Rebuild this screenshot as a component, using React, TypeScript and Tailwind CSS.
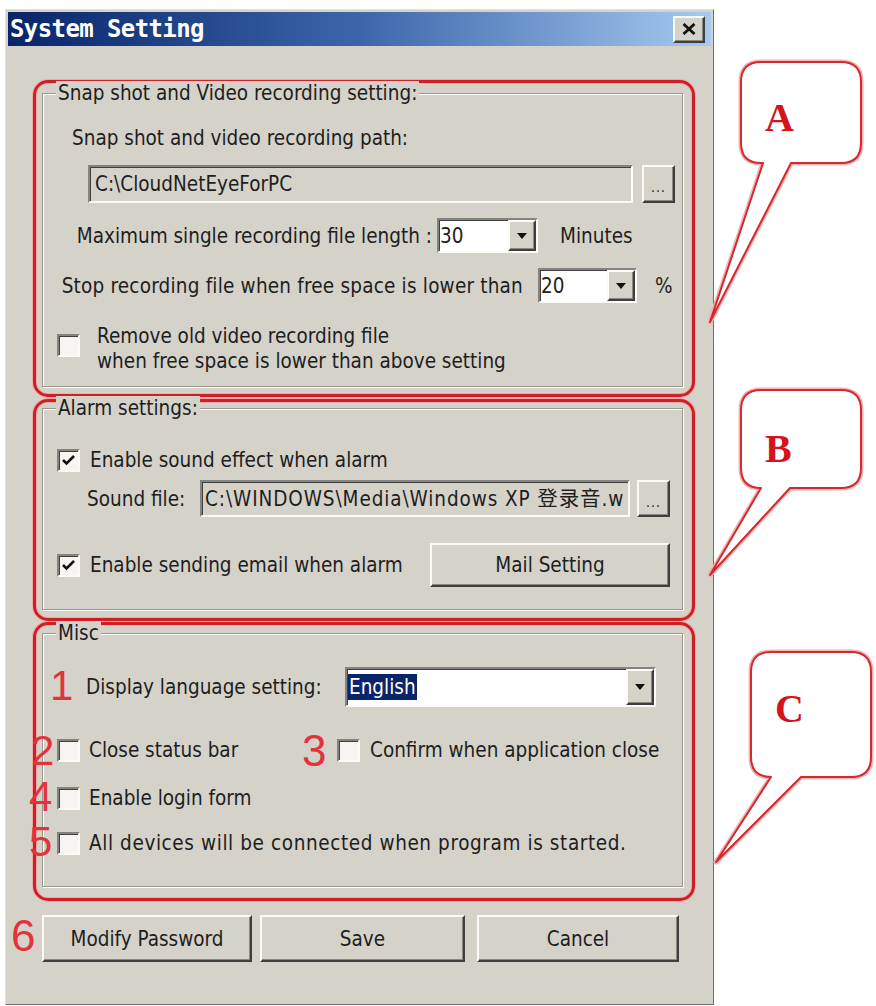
import React from "react";

function Raised({ className = "", children }: { className?: string; children?: React.ReactNode }) {
  return (
    <div
      className={`flex items-center justify-center bg-[#d5d2ca] border-2 border-t-[#fbfaf7] border-l-[#fbfaf7] border-r-[#3e3e3e] border-b-[#3e3e3e] shadow-[inset_-1px_-1px_0_#8a8883] ${className}`}
    >
      {children}
    </div>
  );
}

function Sunken({ className = "", children }: { className?: string; children?: React.ReactNode }) {
  return (
    <div
      className={`border-2 border-t-[#858380] border-l-[#858380] border-r-[#fbfaf7] border-b-[#fbfaf7] shadow-[inset_1px_1px_0_#404040] ${className}`}
    >
      {children}
    </div>
  );
}

function Check({ checked = false }: { checked?: boolean }) {
  return (
    <Sunken className="w-[23px] h-[23px] shrink-0 bg-[#f6f5f1] flex items-center justify-center">
      {checked && (
        <svg width="15" height="13" viewBox="0 0 15 13">
          <path d="M2 6 L5.5 9.5 L13 2" fill="none" stroke="#111" strokeWidth="2.6" />
        </svg>
      )}
    </Sunken>
  );
}

function Arrow() {
  return (
    <Raised className="w-[28px] h-full shrink-0">
      <svg width="10" height="6" viewBox="0 0 10 6">
        <path d="M0 0 H10 L5 6 Z" fill="#111" />
      </svg>
    </Raised>
  );
}

function Combo({ className = "", value }: { className?: string; value: string }) {
  return (
    <Sunken className={`flex bg-white ${className}`}>
      <div className="flex-1 flex items-center pl-[1px] overflow-hidden">{value}</div>
      <Arrow />
    </Sunken>
  );
}

function Frame({ legend, className = "", children }: { legend: string; className?: string; children?: React.ReactNode }) {
  return (
    <div
      className={`relative border border-[#9b9891] shadow-[inset_1px_1px_0_#ffffff,1px_1px_0_#ffffff] ${className}`}
    >
      <div className="absolute left-[13px] top-[-13px] bg-[#d5d2ca] px-[2px] leading-[24px] whitespace-nowrap">
        {legend}
      </div>
      {children}
    </div>
  );
}

function Num({ n, className = "" }: { n: string; className?: string }) {
  return (
    <span
      className={`absolute font-['Liberation_Sans',sans-serif] text-[42px] leading-none text-[#e2333a] ${className}`}
    >
      {n}
    </span>
  );
}

function RedBox({ className = "", children }: { className?: string; children?: React.ReactNode }) {
  return (
    <div
      className={`w-[662px] rounded-[15px] border-[3px] border-[#cf1f26] shadow-[0_0_0_1px_#f2abab,inset_0_0_0_1px_#f2abab] pl-[6px] ${className}`}
    >
      {children}
    </div>
  );
}

function calloutPath(x0: number, y0: number, x1: number, y1: number, t1: number, t2: number, px: number, py: number) {
  const r = 20;
  return `M ${x0 + r} ${y0} H ${x1 - r} Q ${x1} ${y0} ${x1} ${y0 + r} V ${y1 - r} Q ${x1} ${y1} ${x1 - r} ${y1} H ${t2} L ${px} ${py} L ${t1} ${y1} H ${x0 + r} Q ${x0} ${y1} ${x0} ${y1 - r} V ${y0 + r} Q ${x0} ${y0} ${x0 + r} ${y0} Z`;
}

function Callouts() {
  const items = [
    { d: calloutPath(741, 62, 861, 163, 763, 791, 710, 322), t: "A", x: 765, y: 131 },
    { d: calloutPath(741, 390, 861, 488, 761, 790, 710, 575), t: "B", x: 765, y: 462 },
    { d: calloutPath(751, 652, 871, 777, 771, 801, 716, 862), t: "C", x: 775, y: 722 },
  ];
  return (
    <svg className="absolute left-0 top-0 pointer-events-none" width="876" height="1006" viewBox="0 0 876 1006">
      {items.map((it) => (
        <g key={it.t}>
          <path d={it.d} fill="#ffffff" stroke="#f2b3b3" strokeWidth="5" strokeLinejoin="round" />
          <path d={it.d} fill="#ffffff" stroke="#d42a2f" strokeWidth="2" strokeLinejoin="round" />
          <text
            x={it.x}
            y={it.y}
            fontFamily="'Liberation Serif', serif"
            fontWeight="bold"
            fontSize="40"
            fill="#d4141c"
          >
            {it.t}
          </text>
        </g>
      ))}
    </svg>
  );
}

export default function App() {
  return (
    <div className="relative w-[876px] h-[1006px] bg-white overflow-hidden pt-[9px] pl-[5px] font-['DejaVu_Sans_Condensed','DejaVu_Sans','Noto_Sans_CJK_SC',sans-serif] text-[20.5px] leading-[24px] text-[#1e1e1e]">
      <div className="w-[709px] h-[996px] border border-t-[#e4e1da] border-l-[#e4e1da] border-r-[#6d6d6d] border-b-[#6d6d6d] bg-[#d5d2ca] p-[2px] flex flex-col">
        {/* Title bar */}
        <div className="h-[34px] shrink-0 bg-linear-to-r from-[#0a246a] via-[#3d66aa] to-[#a6caf0] flex items-center justify-between pl-[2px] pr-[6px]">
          <span className="font-['DejaVu_Sans_Mono',monospace] font-bold text-[24px] text-white leading-none tracking-[-0.6px]">
            System Setting
          </span>
          <Raised className="w-[32px] h-[27px]">
            <svg width="14" height="12" viewBox="0 0 14 12">
              <path d="M1.5 1 L12.5 11 M12.5 1 L1.5 11" stroke="#111" strokeWidth="2.8" />
            </svg>
          </Raised>
        </div>

        {/* Body */}
        <div className="flex-1 flex flex-col pl-[25px] pt-[34px]">
          {/* A */}
          <RedBox className="h-[317px] pt-[10px]">
            <Frame legend="Snap shot and Video recording setting:" className="w-[641px] h-[294px]">
              <div className="flex flex-col pt-[32px]">
                <div className="pl-[29px] h-[24px]">Snap shot and video recording path:</div>
                <div className="flex items-center mt-[15px] pl-[45px] h-[38px]">
                  <Sunken className="w-[545px] h-[38px] flex items-center pl-[5px]">C:\CloudNetEyeForPC</Sunken>
                  <Raised className="w-[33px] h-[38px] ml-[9px]">
                    <span className="text-[14px] leading-none tracking-[1px] mt-[6px]">...</span>
                  </Raised>
                </div>
                <div className="flex items-center mt-[15px] h-[35px]">
                  <div className="w-[394px] text-right pr-[5px] whitespace-nowrap">Maximum single recording file length :</div>
                  <Combo className="w-[101px] h-[35px]" value="30" />
                  <span className="ml-[22px]">Minutes</span>
                </div>
                <div className="flex items-center mt-[15px] h-[35px]">
                  <div className="w-[495px] text-right pr-[15px] whitespace-nowrap tracking-[0.2px]">Stop recording file when free space is lower than</div>
                  <Combo className="w-[99px] h-[35px]" value="20" />
                  <span className="ml-[18px]">%</span>
                </div>
                <div className="flex items-start mt-[21px] pl-[14px]">
                  <div className="mt-[10px]">
                    <Check />
                  </div>
                  <div className="ml-[17px] leading-[25px]">
                    Remove old video recording file
                    <br />
                    when free space is lower than above setting
                  </div>
                </div>
              </div>
            </Frame>
          </RedBox>

          {/* B */}
          <RedBox className="h-[222px] pt-[6px] mt-[2px]">
            <Frame legend="Alarm settings:" className="w-[641px] h-[202px]">
              <div className="flex flex-col pt-[39px]">
                <div className="flex items-center pl-[14px] h-[24px]">
                  <Check checked />
                  <span className="ml-[10px]">Enable sound effect when alarm</span>
                </div>
                <div className="flex items-center mt-[8px] pl-[44px] h-[37px]">
                  <span className="w-[113px] shrink-0">Sound file:</span>
                  <Sunken className="w-[430px] h-[37px] flex items-center pl-[3px] whitespace-nowrap tracking-[0.9px]">
                    C:\WINDOWS\Media\Windows XP 登录音.w
                  </Sunken>
                  <Raised className="w-[33px] h-[37px] ml-[7px]">
                    <span className="text-[14px] leading-none tracking-[1px] mt-[6px]">...</span>
                  </Raised>
                </div>
                <div className="flex items-center justify-between mt-[26px] pl-[14px] pr-[12px] h-[44px]">
                  <div className="flex items-center">
                    <Check checked />
                    <span className="ml-[10px]">Enable sending email when alarm</span>
                  </div>
                  <Raised className="w-[240px] h-[44px]">Mail Setting</Raised>
                </div>
              </div>
            </Frame>
          </RedBox>

          {/* C */}
          <RedBox className="h-[279px] pt-[8px] mt-[1px]">
            <Frame legend="Misc" className="w-[641px] h-[254px]">
              <div className="flex flex-col pt-[33px]">
                <div className="relative flex items-center pl-[43px] h-[40px]">
                  <Num n="1" className="left-[7px] top-[-2px]" />
                  <span className="w-[259px] shrink-0">Display language setting:</span>
                  <Sunken className="w-[311px] h-[40px] flex bg-white">
                    <div className="flex-1 flex items-center pl-[1px]">
                      <span className="bg-[#0a246a] text-white px-[1px] leading-[26px]">English</span>
                    </div>
                    <Arrow />
                  </Sunken>
                </div>
                <div className="relative flex items-center mt-[31px] pl-[14px] h-[24px]">
                  <Num n="2" className="left-[-12px] top-[-8px]" />
                  <div className="w-[280px] shrink-0 flex items-center">
                    <Check />
                    <span className="ml-[9px]">Close status bar</span>
                  </div>
                  <Num n="3" className="left-[259px] top-[-9px] text-[44px]" />
                  <Check />
                  <span className="ml-[10px]">Confirm when application close</span>
                </div>
                <div className="relative flex items-center mt-[24px] pl-[14px] h-[24px]">
                  <Num n="4" className="left-[-14px] top-[-10px]" />
                  <Check />
                  <span className="ml-[9px]">Enable login form</span>
                </div>
                <div className="relative flex items-center mt-[21px] pl-[14px] h-[24px]">
                  <Num n="5" className="left-[-14px] top-[-10px]" />
                  <Check />
                  <span className="ml-[9px] tracking-[0.6px]">All devices will be connected when program is started.</span>
                </div>
              </div>
            </Frame>
          </RedBox>

          {/* Buttons */}
          <div className="relative flex items-center mt-[14px] h-[47px]">
            <Num n="6" className="left-[-22px] top-[-1px] text-[44px]" />
            <Raised className="w-[210px] h-[47px] ml-[9px]">Modify Password</Raised>
            <Raised className="w-[205px] h-[47px] ml-[8px]">Save</Raised>
            <Raised className="w-[202px] h-[47px] ml-[12px]">Cancel</Raised>
          </div>
        </div>
      </div>
      <Callouts />
    </div>
  );
}
